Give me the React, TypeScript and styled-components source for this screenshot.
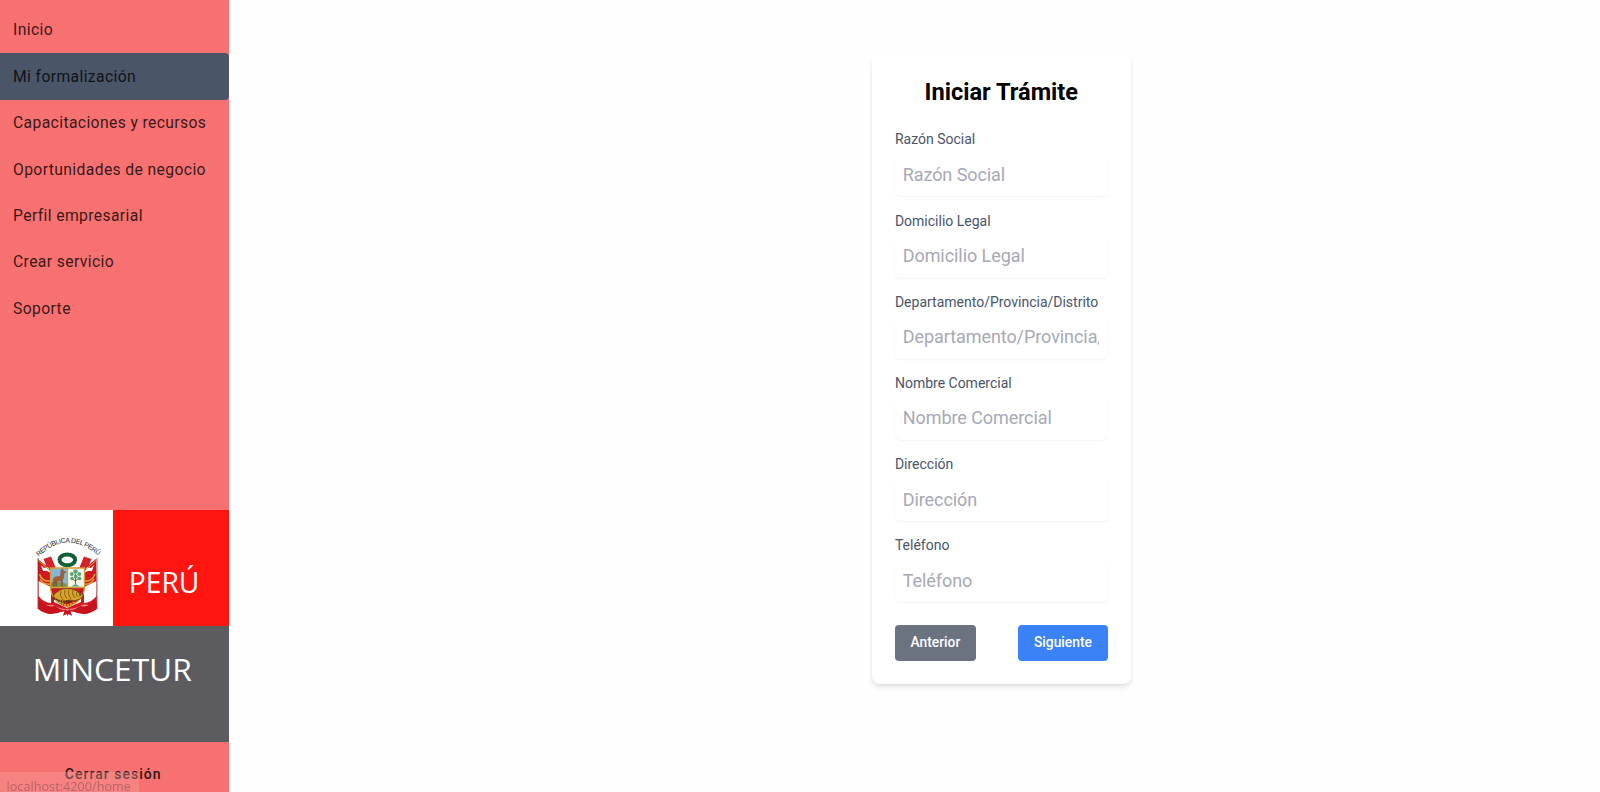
import React from 'react';
import styled, { createGlobalStyle } from 'styled-components';

const GlobalStyle = createGlobalStyle`
  *, *::before, *::after { box-sizing: border-box; }
  html, body { margin: 0; height: 100%; }
  body { font-family: Roboto, "Liberation Sans", sans-serif; background: #fefefe; overflow: hidden; }
`;

const Page = styled.div`
  display: flex;
  height: 100vh;
  min-height: 792px;
`;

const Sidebar = styled.aside`
  display: flex;
  flex-direction: column;
  flex: none;
  width: 229.33px;
  background: #f87171;
`;

const Nav = styled.nav`
  display: flex;
  flex: 1;
  flex-direction: column;
  padding-top: 6.8px;
`;

const NavItem = styled.a<{ $active?: boolean }>`
  display: flex;
  align-items: center;
  height: 46.4px;
  padding: 0 13px;
  border-radius: ${(p) => (p.$active ? '0 4px 4px 0' : '0')};
  background: ${(p) => (p.$active ? '#4a5568' : 'transparent')};
  color: rgba(0, 0, 0, 0.8);
  font-size: 15.7px;
  letter-spacing: 0.38px;
  white-space: nowrap;
  cursor: pointer;
`;

const Brand = styled.div`
  display: flex;
  flex-direction: column;
  height: 232px;
`;

const BrandTop = styled.div`
  display: flex;
  flex: 1;
`;

const CrestPanel = styled.div`
  display: flex;
  width: 113.33px;
  background: #fff;
`;

const CountryPanel = styled.div`
  flex: 1;
  background: #ff1410;
`;

const MinistryPanel = styled.div`
  flex: 1;
  background: #5c5b5f;
`;

const WordArt = styled.svg`
  display: block;
  fill: #fff;
  font-family: "Open Sans", "Noto Sans", sans-serif;
`;

const SidebarFooter = styled.div`
  display: flex;
  justify-content: center;
  height: 50px;
  padding: 21px 3px 0 0;
`;

const LogoutButton = styled.button`
  height: 22px;
  padding: 0;
  border: 0;
  background: transparent;
  color: rgba(0, 0, 0, 0.84);
  font: 500 14px/22px Roboto, sans-serif;
  letter-spacing: 1.02px;
`;

const StatusBar = styled.div`
  position: fixed;
  bottom: 0;
  left: 0;
  width: 139px;
  height: 20px;
  padding-left: 6.5px;
  overflow: hidden;
  border-radius: 0 3px 0 0;
  background: rgba(244, 165, 165, 0.34);
  color: rgba(120, 70, 75, 0.5);
  font: 12.7px/29px "Open Sans", sans-serif;
  white-space: nowrap;
`;

const Main = styled.main`
  display: flex;
  flex: 1;
  align-items: flex-start;
  justify-content: center;
  padding: 52.5px 0 0 173.3px;
`;

const Card = styled.form`
  width: 259.6px;
  height: 631.5px;
  padding: 23px 23.4px;
  border-radius: 8px;
  background: #fff;
  box-shadow: 0 4px 6px -1px rgba(0, 0, 0, 0.1), 0 2px 4px -1px rgba(0, 0, 0, 0.06);
`;

const Title = styled.h2`
  margin: 0 0 21.9px;
  color: #000;
  font-size: 23.6px;
  font-weight: 700;
  line-height: 32px;
  text-align: center;
`;

const Field = styled.div`
  display: flex;
  flex-direction: column;
  gap: 4.5px;
  margin-bottom: 14.05px;
`;

const Label = styled.label`
  color: #4a5568;
  font-size: 14px;
  line-height: 20px;
  white-space: nowrap;
`;

const Input = styled.input`
  width: 100%;
  height: 42.6px;
  padding: 0 8.4px 1.4px 7.8px;
  border: 0;
  border-radius: 6px;
  outline: 0;
  background: #fff;
  box-shadow: 0 1px 2px rgba(0, 0, 0, 0.05);
  font: 18px Roboto, sans-serif;
  letter-spacing: -0.07px;

  &::placeholder { color: #a7a9b4; opacity: 1; }
`;

const Actions = styled.div`
  display: flex;
  justify-content: space-between;
  padding-top: 8.8px;
`;

const Button = styled.button<{ $primary?: boolean }>`
  width: ${(p) => (p.$primary ? '89.6px' : '81px')};
  height: 35.5px;
  padding: 0 0 2px;
  border: 0;
  border-radius: 4px;
  background: ${(p) => (p.$primary ? '#3b82f6' : '#6b7280')};
  color: #fff;
  font: 500 13.8px Roboto, sans-serif;
`;

function Crest() {
  return (
    <svg width="113.33" height="116" viewBox="0 0 113.33 116">
      <defs>
        <path id="motto" d="M38.6 46.6 Q67.5 18.5 100 47" />
        <clipPath id="shieldClip">
          <path d="M50.5 58 H84.5 V77 Q84 91 67.5 97 Q51 91 50.5 77 Z" />
        </clipPath>
      </defs>
      <text fontFamily="Liberation Sans, sans-serif" fontSize="6.8" fill="#222">
        <textPath href="#motto" textLength="67" lengthAdjust="spacing">REPÚBLICA DEL PERÚ</textPath>
      </text>
      {/* flags and drapery */}
      <path d="M38 49 L44 54 L54 61 V92 L67 98 L81 92 V61 L91 53 L96 49 L97 99 Q87 106 76 102 L68 101 L59 102 Q47 106 38 99 Z" fill="#cf1820" />
      <path d="M38.5 71 L51 77 V93 Q44 93 38.5 86 Z M96.5 71 L84 77 V93 Q91 93 96.5 86 Z" fill="#fff" />
      <path d="M46 95.5 Q52 93.5 56 96.5 Q61 99 67 99 Q75 99 80 96 Q85 93.5 89 95.5 Q83 101 73 99.5 L67 101 L61 99.5 Q51 101 46 95.5 Z" fill="#e58a88" />
      <path d="M39 91 Q47 98 55 96 L63 101 Q49 108 39 99 Z M96 91 Q88 98 80 96 L72 101 Q86 108 96 99 Z" fill="#c9131c" />
      <path d="M43.5 49 L51 46.5 L57 61 L50 65 Z M91.5 49 L84 46.5 L78 61 L85 65 Z" fill="#d3222a" />
      <path d="M41 55 L44 58 L48 57 L51 63 L47 61 L43 61 Z M94 55 L91 58 L87 57 L84 63 L88 61 L92 61 Z" fill="#fff" />
      <path d="M38 50 L56 66 M96.5 50 L79 66" stroke="#d7aa39" strokeWidth="1" />
      <path d="M38 48 V99 M97 48 V99" stroke="#7c282c" strokeWidth=".7" />
      <path d="M39.5 64 Q42 72 51 71 M95 64 Q92 72 84 71 M40 69 Q43 75 51 74 M94 69 Q91 75 84 74" fill="none" stroke="#e3a52c" strokeWidth="1.5" />
      {/* laurel wreath */}
      <ellipse cx="67.3" cy="49.8" rx="7.8" ry="5.4" fill="#fff" stroke="#176b3c" strokeWidth="4" />
      <ellipse cx="67.3" cy="49.8" rx="7.8" ry="5.4" fill="none" stroke="#0f4d2b" strokeWidth="3" strokeDasharray="1 1.6" />
      {/* shield quarters */}
      <g clipPath="url(#shieldClip)">
        <rect x="50" y="57" width="17.5" height="21" fill="#83b9d5" />
        <rect x="67.5" y="57" width="17.5" height="21" fill="#f4f6ec" />
        <rect x="50" y="77" width="35" height="21" fill="#c61c21" />
        <path d="M50 73 Q58 70 67 74 V78 H50 Z" fill="#739852" />
      </g>
      <path d="M50.5 58 H84.5 V77 Q84 91 67.5 97 Q51 91 50.5 77 Z M67.5 58 V77 M50.5 77.5 H84.5" fill="none" stroke="#d29d35" strokeWidth="1.3" />
      {/* vicuña */}
      <path d="M61 60 L62.5 58.8 L63.5 61 L66 62 L64 63.2 L63.5 68 L62.5 70 V76 H61.3 V71 H57 V76 H55.6 V71 L54.3 74 V76 H53 L53.4 69 L55 67 L60.5 66.4 Z" fill="#a65f32" stroke="#713b25" strokeWidth=".4" />
      {/* cinchona tree */}
      <path d="M75.5 76 V64 M71 68 L75.5 71 L80 67" fill="none" stroke="#795a32" strokeWidth="1" />
      <g fill="#5aa572">
        <circle cx="75.5" cy="61.5" r="2.2" /><circle cx="71.8" cy="64" r="1.9" /><circle cx="79.3" cy="64" r="1.9" />
        <circle cx="72" cy="68.5" r="1.8" /><circle cx="79.5" cy="68.5" r="1.8" /><circle cx="75.7" cy="66.5" r="1.9" />
        <path d="M71 76.5 L75.5 74 L80 76.5 Z" />
      </g>
      {/* cornucopia */}
      <path d="M54 89 Q52 85 57 82 Q63 77 72 79 Q80 81 80 86 Q82 84 81 81 Q85 86 80 89 Q75 92 69 90 L62 93 Z" fill="#d9a428" stroke="#644113" strokeWidth=".8" />
      <path d="M61 81 Q59 85 63 90 M65 80 Q63 84 67 89 M69 79.5 Q67 83 71 89 M73 80 Q71 84 75 88 M77 82 Q75 85 78 87" fill="none" stroke="#745019" strokeWidth=".8" />
      <path d="M54 88 Q59 92 66 91 L72 93 M57 91 L64 95" fill="none" stroke="#422d15" strokeWidth="2" strokeDasharray="1.5 1" />
      <path d="M56 91 L67 95.5 L75 92" fill="none" stroke="#e3ba36" strokeWidth="1.4" strokeDasharray="2 1" />
      <path d="M65 99 L67.5 101 L70 99 L72 106 L68.5 104 L67.5 106 L66.5 104 L63 106 Z" fill="#c8141c" />
    </svg>
  );
}

const links = [
  'Inicio',
  'Mi formalización',
  'Capacitaciones y recursos',
  'Oportunidades de negocio',
  'Perfil empresarial',
  'Crear servicio',
  'Soporte',
];

const fields = [
  'Razón Social',
  'Domicilio Legal',
  'Departamento/Provincia/Distrito',
  'Nombre Comercial',
  'Dirección',
  'Teléfono',
];

export default function App() {
  return (
    <>
      <GlobalStyle />
      <Page>
        <Sidebar>
          <Nav>
            {links.map((name) => (
              <NavItem key={name} $active={name === 'Mi formalización'}>{name}</NavItem>
            ))}
          </Nav>
          <Brand>
            <BrandTop>
              <CrestPanel><Crest /></CrestPanel>
              <CountryPanel>
                <WordArt width="116" height="116">
                  <text x="15.8" y="83.3" fontSize="29" textLength="70.5" lengthAdjust="spacingAndGlyphs">PERÚ</text>
                </WordArt>
              </CountryPanel>
            </BrandTop>
            <MinistryPanel>
              <WordArt width="229" height="116">
                <text x="32.8" y="55" fontSize="31.3" textLength="159" lengthAdjust="spacingAndGlyphs">MINCETUR</text>
              </WordArt>
            </MinistryPanel>
          </Brand>
          <SidebarFooter>
            <LogoutButton>Cerrar sesión</LogoutButton>
          </SidebarFooter>
        </Sidebar>
        <Main>
          <Card>
            <Title>Iniciar Trámite</Title>
            {fields.map((name) => (
              <Field key={name}>
                <Label>{name}</Label>
                <Input placeholder={name} />
              </Field>
            ))}
            <Actions>
              <Button type="button">Anterior</Button>
              <Button type="button" $primary>Siguiente</Button>
            </Actions>
          </Card>
        </Main>
      </Page>
      <StatusBar>localhost:4200/home</StatusBar>
    </>
  );
}
